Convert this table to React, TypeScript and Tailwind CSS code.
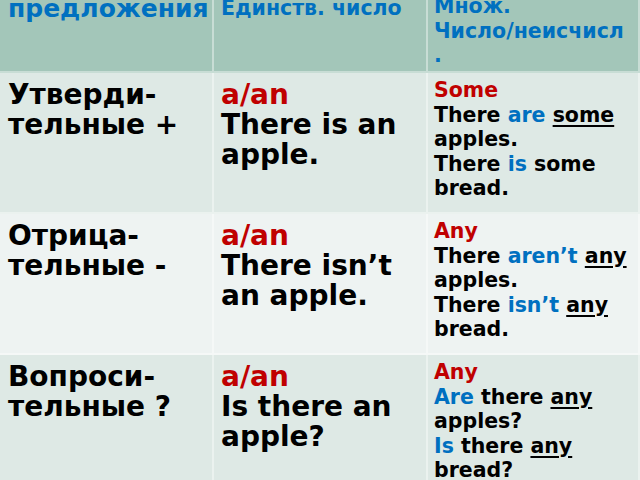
import React from "react";

const F = { fontFamily: '"DejaVu Sans", "Noto Sans", sans-serif' };

function Big({ children }: { children: React.ReactNode }) {
  return <div className="whitespace-nowrap">{children}</div>;
}

export default function App() {
  const blue = "text-[#0070c0]";
  const red = "text-[#c00000]";
  const cell = "border-r-2 border-b-2 border-white/40 overflow-hidden";
  const c1 = `${cell} pl-[8px] pt-[7px] text-[28px] leading-[30px] font-bold text-black`;
  const c2 = `${cell} pl-[7px] pt-[7px] text-[28px] leading-[30px] font-bold text-black`;
  const c3 = `${cell} pl-[6px] pt-[5px] text-[20.5px] leading-[24.5px] font-bold text-black`;
  const u = "underline decoration-[1.5px] underline-offset-[3px]";
  return (
    <div
      className="w-[640px] h-[480px] overflow-hidden bg-[#dee9e5] grid grid-cols-[214px_214px_212px] grid-rows-[73px_141px_141px_141px]"
      style={F}
    >
      {/* header */}
      <div className={`${cell} bg-[#a3c6b9] pl-[8px]`}>
        <div className={`-mt-[6px] text-[25px] leading-[30px] font-bold ${blue}`}>предложения</div>
      </div>
      <div className={`${cell} bg-[#a3c6b9] pl-[7px]`}>
        <div className={`-mt-[4px] text-[20.5px] leading-[25px] font-bold ${blue} whitespace-nowrap`}>
          Единств. число
        </div>
      </div>
      <div className={`${cell} bg-[#a3c6b9] pl-[6px]`}>
        <div className={`-mt-[6px] text-[20.5px] leading-[24.5px] font-bold ${blue}`}>
          <div>Множ.</div>
          <div className="whitespace-nowrap">Число/неисчисл</div>
          <div>.</div>
        </div>
      </div>

      {/* row 1 */}
      <div className={`${c1} bg-[#dee9e5]`}>
        <Big>Утверди-</Big>
        <Big>тельные +</Big>
      </div>
      <div className={`${c2} bg-[#dee9e5]`}>
        <Big><span className={red}>a/an</span></Big>
        <Big>There is an</Big>
        <Big>apple.</Big>
      </div>
      <div className={`${c3} bg-[#dee9e5]`}>
        <Big><span className={red}>Some</span></Big>
        <Big>There <span className={blue}>are</span> <span className={u}>some</span></Big>
        <Big>apples.</Big>
        <Big>There <span className={blue}>is</span> some</Big>
        <Big>bread.</Big>
      </div>

      {/* row 2 */}
      <div className={`${c1} bg-[#eef3f2]`}>
        <Big>Отрица-</Big>
        <Big>тельные -</Big>
      </div>
      <div className={`${c2} bg-[#eef3f2]`}>
        <Big><span className={red}>a/an</span></Big>
        <Big>There isn’t</Big>
        <Big>an apple.</Big>
      </div>
      <div className={`${c3} bg-[#eef3f2]`}>
        <Big><span className={red}>Any</span></Big>
        <Big>There <span className={blue}>aren’t</span> <span className={u}>any</span></Big>
        <Big>apples.</Big>
        <Big>There <span className={blue}>isn’t</span> <span className={u}>any</span></Big>
        <Big>bread.</Big>
      </div>

      {/* row 3 */}
      <div className={`${c1} bg-[#dee9e5]`}>
        <Big>Вопроси-</Big>
        <Big>тельные ?</Big>
      </div>
      <div className={`${c2} bg-[#dee9e5]`}>
        <Big><span className={red}>a/an</span></Big>
        <Big>Is there an</Big>
        <Big>apple?</Big>
      </div>
      <div className={`${c3} bg-[#dee9e5]`}>
        <Big><span className={red}>Any</span></Big>
        <Big><span className={blue}>Are</span> there <span className={u}>any</span></Big>
        <Big>apples?</Big>
        <Big><span className={blue}>Is</span> there <span className={u}>any</span></Big>
        <Big>bread?</Big>
      </div>
    </div>
  );
}
